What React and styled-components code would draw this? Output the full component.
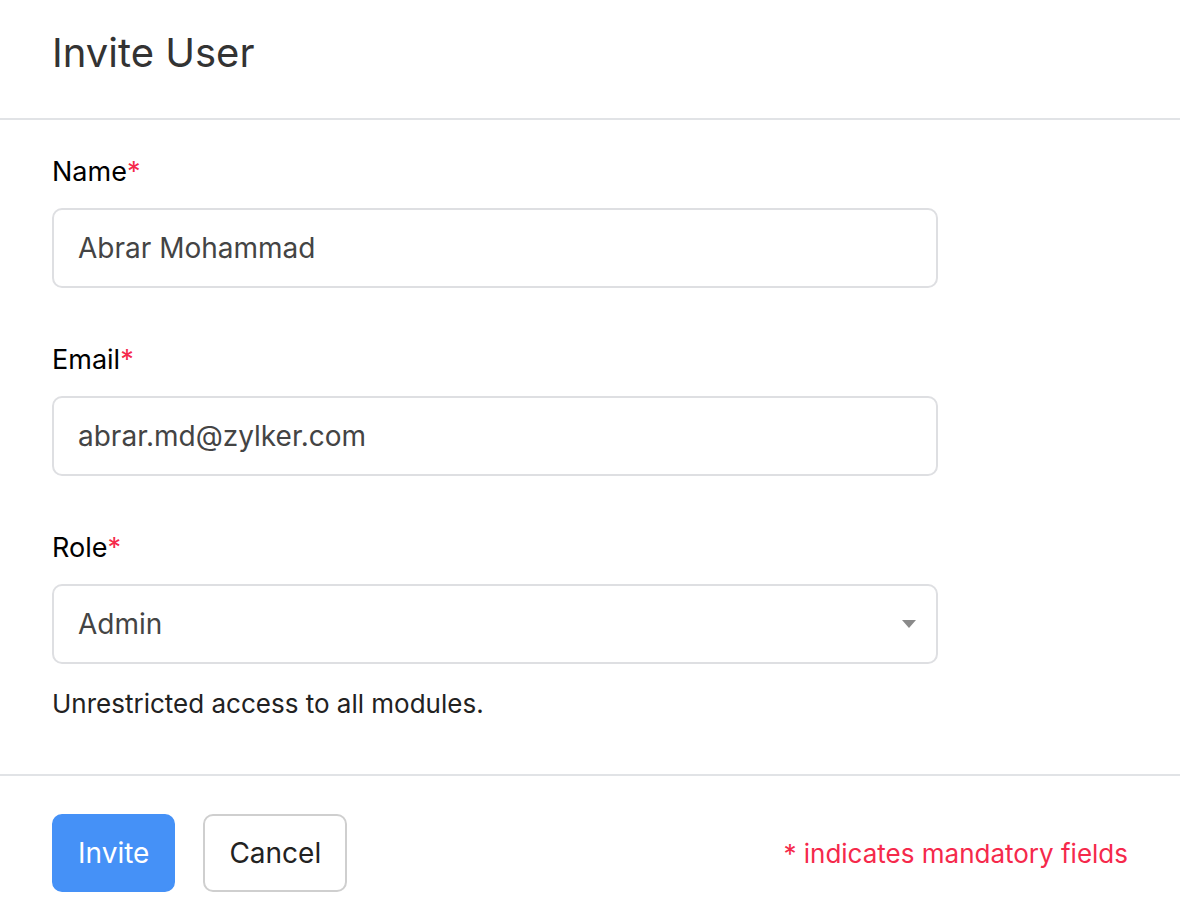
import React from 'react';
import styled, { createGlobalStyle } from 'styled-components';

const GlobalStyle = createGlobalStyle`
  html, body {
    margin: 0;
    padding: 0;
    background: #fff;
  }
  body {
    font-family: Inter, "Noto Sans", "Liberation Sans", sans-serif;
  }
  * {
    box-sizing: border-box;
  }
`;

const App = () => {
  return (
    <>
      <GlobalStyle />
      <Dialog>
        <Header>
          <Title>Invite User</Title>
        </Header>
        <Body>
          <Field>
            <Label>Name<Star>*</Star></Label>
            <Input>Abrar Mohammad</Input>
          </Field>
          <Field>
            <Label>Email<Star>*</Star></Label>
            <Input>abrar.md@zylker.com</Input>
          </Field>
          <Field>
            <Label>Role<Star>*</Star></Label>
            <Input>
              Admin
              <Caret />
            </Input>
            <Help>Unrestricted access to all modules.</Help>
          </Field>
        </Body>
        <Footer>
          <Actions>
            <Button primary>Invite</Button>
            <Button>Cancel</Button>
          </Actions>
          <Note>* indicates mandatory fields</Note>
        </Footer>
      </Dialog>
    </>
  );
};

export default App;

const Dialog = styled.div`
  width: 1180px;
  height: 924px;
  display: flex;
  flex-direction: column;
  background: #fff;
`;

const Header = styled.div`
  height: 120px;
  padding: 0 52px;
  display: flex;
  align-items: center;
  border-bottom: 2px solid #e1e3e6;
`;

const Title = styled.h1`
  margin: 0 0 14px;
  font-size: 40px;
  font-weight: 400;
  color: #333;
`;

const Body = styled.div`
  padding: 36px 52px 54px;
  display: flex;
  flex-direction: column;
  gap: 56px;
  border-bottom: 2px solid #e1e3e6;
`;

const Field = styled.div`
  display: flex;
  flex-direction: column;
  width: 886px;
`;

const Label = styled.div`
  font-size: 27px;
  line-height: 32px;
  color: #000;
  margin-bottom: 20px;
`;

const Star = styled.span`
  color: #f5294b;
`;

const Input = styled.div`
  position: relative;
  height: 80px;
  border: 2px solid #dedfe2;
  border-radius: 10px;
  padding: 0 24px;
  display: flex;
  align-items: center;
  font-size: 28px;
  color: #444;
`;

const Caret = styled.span`
  position: absolute;
  right: 20px;
  top: 34px;
  width: 0;
  height: 0;
  border-left: 7px solid transparent;
  border-right: 7px solid transparent;
  border-top: 8px solid #8a8a8a;
`;

const Help = styled.div`
  margin-top: 24px;
  font-size: 26px;
  line-height: 32px;
  color: #222;
`;

const Footer = styled.div`
  padding: 38px 52px 0;
  display: flex;
  align-items: center;
  justify-content: space-between;
`;

const Actions = styled.div`
  display: flex;
  gap: 28px;
`;

const Button = styled.button`
  height: 78px;
  padding: 0 24px;
  border-radius: 10px;
  font-family: inherit;
  font-size: 28px;
  border: 2px solid ${(p) => (p.primary ? '#4591f7' : '#cfcfcf')};
  background: ${(p) => (p.primary ? '#4591f7' : '#fff')};
  color: ${(p) => (p.primary ? '#fff' : '#222')};
`;

const Note = styled.div`
  font-size: 26px;
  color: #f5294b;
`;
